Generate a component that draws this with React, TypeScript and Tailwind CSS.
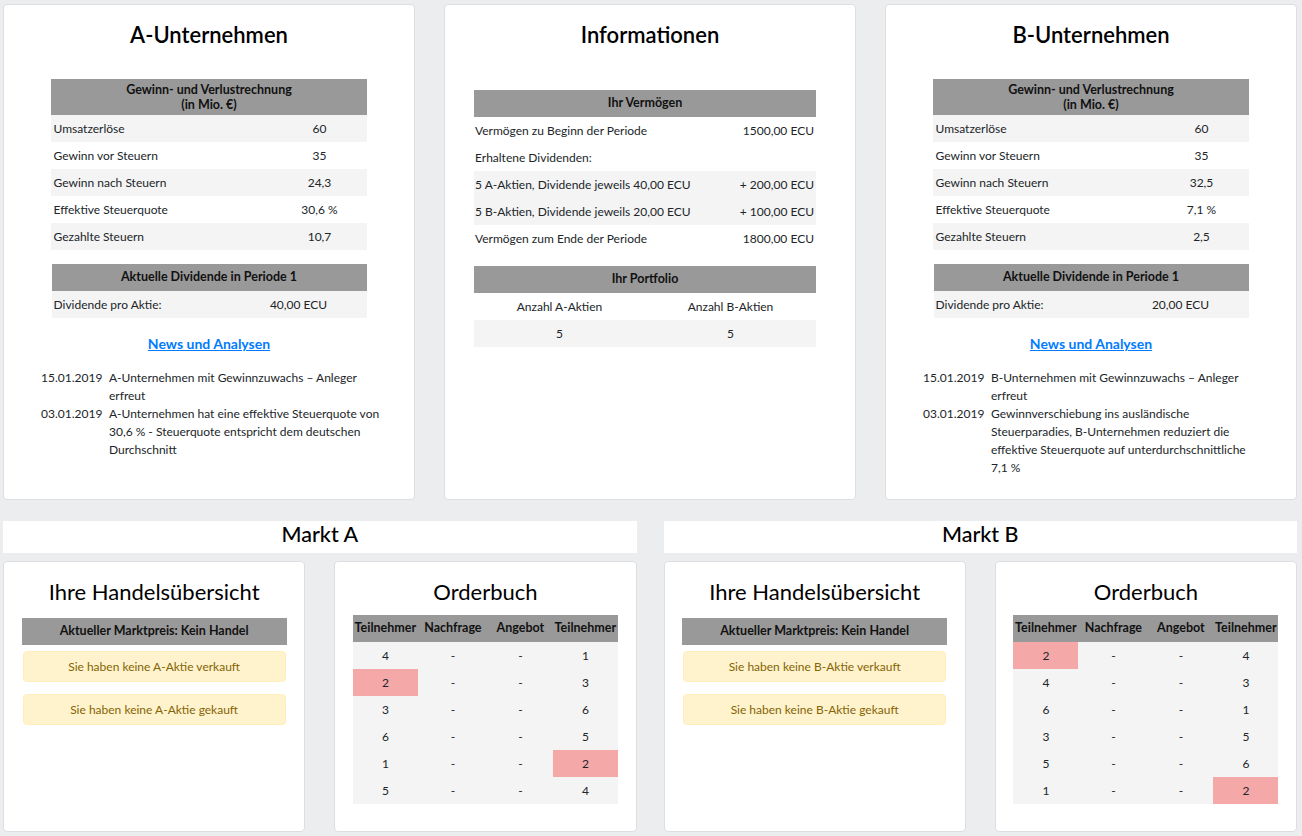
import React from "react";

type Row = [string, string];

interface CompanyProps {
    name: string;
    rows: Row[];
    dividend: string;
    news: { date: string; lines: string[] }[];
}

const font = { fontFamily: "Lato, 'Noto Sans', sans-serif" };

function Card({ className = "", children }: { className?: string; children: React.ReactNode }) {
    return (
        <div className={"rounded-[4px] border border-[#dcdee1] bg-white " + className}>{children}</div>
    );
}

function CompanyCard({ name, rows, dividend, news }: CompanyProps) {
    return (
        <Card className="h-[496px] pt-[15px]">
            <h2 className="text-center text-[22px] font-semibold leading-[30px] text-black">{name}</h2>

            <table className="mx-auto mt-[29px] w-[315px] table-fixed text-[12px]">
                <colgroup>
                    <col className="w-[221px]" />
                    <col className="w-[94px]" />
                </colgroup>
                <thead>
                    <tr className="bg-[#999999]">
                        <th colSpan={2} className="py-[3px] text-center text-[12.5px] font-bold leading-[15px] text-[#111]">
                            Gewinn- und Verlustrechnung
                            <br />
                            (in Mio. €)
                        </th>
                    </tr>
                </thead>
                <tbody>
                    {rows.map(([label, value], i) => (
                        <tr key={label} className={"h-[27px] " + (i % 2 === 0 ? "bg-[#f4f4f4]" : "bg-white")}>
                            <td className="pl-[2px]">{label}</td>
                            <td className="text-center">{value}</td>
                        </tr>
                    ))}
                </tbody>
            </table>

            <table className="mx-auto mt-[14px] w-[315px] table-fixed text-[12px]">
                <colgroup>
                    <col className="w-[179px]" />
                    <col className="w-[136px]" />
                </colgroup>
                <thead>
                    <tr className="h-[27px] bg-[#999999]">
                        <th colSpan={2} className="text-center text-[12.5px] font-bold text-[#111]">
                            Aktuelle Dividende in Periode 1
                        </th>
                    </tr>
                </thead>
                <tbody>
                    <tr className="h-[27px] bg-[#f4f4f4]">
                        <td className="pl-[2px]">Dividende pro Aktie:</td>
                        <td className="text-center">{dividend}</td>
                    </tr>
                </tbody>
            </table>

            <div className="mt-[13px] text-center">
                <a href="#" className="text-[14px] font-bold leading-[20px] text-[#007bff] underline">
                    News und Analysen
                </a>
            </div>

            <div className="mt-[14px] pl-[37px] text-[12px] leading-[18px]">
                {news.map((n) => (
                    <div key={n.date + n.lines[0]} className="flex">
                        <div className="w-[68px] shrink-0">{n.date}</div>
                        <div className="whitespace-nowrap">
                            {n.lines.map((l, i) => (
                                <div key={i}>{l}</div>
                            ))}
                        </div>
                    </div>
                ))}
            </div>
        </Card>
    );
}

function InfoCard() {
    const rows: { label: string; value: string; shaded: boolean }[] = [
        { label: "Vermögen zu Beginn der Periode", value: "1500,00 ECU", shaded: false },
        { label: "Erhaltene Dividenden:", value: "", shaded: false },
        { label: "5 A-Aktien, Dividende jeweils 40,00 ECU", value: "+ 200,00 ECU", shaded: true },
        { label: "5 B-Aktien, Dividende jeweils 20,00 ECU", value: "+ 100,00 ECU", shaded: true },
        { label: "Vermögen zum Ende der Periode", value: "1800,00 ECU", shaded: false },
    ];
    return (
        <Card className="h-[496px] pt-[15px]">
            <h2 className="text-center text-[22px] font-semibold leading-[30px] text-black">Informationen</h2>

            <table className="ml-[29px] mt-[40px] w-[342px] text-[12px]">
                <thead>
                    <tr className="h-[27px] bg-[#999999]">
                        <th colSpan={2} className="text-center text-[12.5px] font-bold text-[#111]">
                            Ihr Vermögen
                        </th>
                    </tr>
                </thead>
                <tbody>
                    {rows.map((r) => (
                        <tr key={r.label} className={"h-[27px] " + (r.shaded ? "bg-[#f4f4f4]" : "bg-white")}>
                            <td className="pl-[1px]">{r.label}</td>
                            <td className="pr-[2px] text-right">{r.value}</td>
                        </tr>
                    ))}
                </tbody>
            </table>

            <table className="ml-[29px] mt-[14px] w-[342px] table-fixed text-[12px]">
                <thead>
                    <tr className="h-[27px] bg-[#999999]">
                        <th colSpan={2} className="text-center text-[12.5px] font-bold text-[#111]">
                            Ihr Portfolio
                        </th>
                    </tr>
                </thead>
                <tbody>
                    <tr className="h-[27px] bg-white">
                        <td className="text-center">Anzahl A-Aktien</td>
                        <td className="text-center">Anzahl B-Aktien</td>
                    </tr>
                    <tr className="h-[27px] bg-[#f4f4f4]">
                        <td className="text-center">5</td>
                        <td className="text-center">5</td>
                    </tr>
                </tbody>
            </table>
        </Card>
    );
}

function TradeOverview({ share }: { share: string }) {
    return (
        <Card className="h-[271px] pt-[15px]">
            <h3 className="text-center text-[22px] font-normal leading-[30px] text-black">Ihre Handelsübersicht</h3>
            <div className="mx-auto mt-[11px] flex h-[27px] w-[265px] items-center justify-center bg-[#999999] text-[12.5px] font-bold text-[#111]">
                Aktueller Marktpreis: Kein Handel
            </div>
            <div className="mx-auto mt-[6px] flex h-[31px] w-[263px] items-center justify-center rounded-[4px] border border-[#ffeeba] bg-[#fff3cd] text-[12px] text-[#856404]">
                Sie haben keine {share}-Aktie verkauft
            </div>
            <div className="mx-auto mt-[12px] flex h-[31px] w-[263px] items-center justify-center rounded-[4px] border border-[#ffeeba] bg-[#fff3cd] text-[12px] text-[#856404]">
                Sie haben keine {share}-Aktie gekauft
            </div>
        </Card>
    );
}

type BookRow = { buyer: string; seller: string; hlBuyer?: boolean; hlSeller?: boolean };

function OrderBook({ rows }: { rows: BookRow[] }) {
    return (
        <Card className="h-[271px] pt-[15px]">
            <h3 className="text-center text-[22px] font-normal leading-[30px] text-black">Orderbuch</h3>
            <table className="mx-auto mt-[8px] w-[265px] table-fixed text-[12px]">
                <colgroup>
                    <col className="w-[65px]" />
                    <col className="w-[70px]" />
                    <col className="w-[65px]" />
                    <col className="w-[65px]" />
                </colgroup>
                <thead>
                    <tr className="h-[27px] bg-[#999999] text-[12.5px] font-bold text-[#111]">
                        <th className="text-center">Teilnehmer</th>
                        <th className="text-center">Nachfrage</th>
                        <th className="text-center">Angebot</th>
                        <th className="text-center">Teilnehmer</th>
                    </tr>
                </thead>
                <tbody>
                    {rows.map((r, i) => (
                        <tr key={i} className="h-[27px] bg-[#f4f4f4]">
                            <td className={"text-center " + (r.hlBuyer ? "bg-[#f5a8a8]" : "")}>{r.buyer}</td>
                            <td className="text-center">-</td>
                            <td className="text-center">-</td>
                            <td className={"text-center " + (r.hlSeller ? "bg-[#f5a8a8]" : "")}>{r.seller}</td>
                        </tr>
                    ))}
                </tbody>
            </table>
        </Card>
    );
}

function Market({ title, share, rows }: { title: string; share: string; rows: BookRow[] }) {
    return (
        <div>
            <div className="flex h-[32px] items-center justify-center bg-white pb-[6px] text-[21.5px] font-medium text-black">
                {title}
            </div>
            <div className="mt-[8px] grid grid-cols-2 gap-[29px]">
                <TradeOverview share={share} />
                <OrderBook rows={rows} />
            </div>
        </div>
    );
}

export default function App() {
    return (
        <div className="min-h-[836px] bg-[#ebedef] pl-[3px] pr-[5px] pt-[4px] text-[#212529]" style={font}>
            <div className="grid grid-cols-3 gap-[29px]">
                <CompanyCard
                    name="A-Unternehmen"
                    rows={[
                        ["Umsatzerlöse", "60"],
                        ["Gewinn vor Steuern", "35"],
                        ["Gewinn nach Steuern", "24,3"],
                        ["Effektive Steuerquote", "30,6 %"],
                        ["Gezahlte Steuern", "10,7"],
                    ]}
                    dividend="40,00 ECU"
                    news={[
                        { date: "15.01.2019", lines: ["A-Unternehmen mit Gewinnzuwachs – Anleger", "erfreut"] },
                        {
                            date: "03.01.2019",
                            lines: [
                                "A-Unternehmen hat eine effektive Steuerquote von",
                                "30,6 % - Steuerquote entspricht dem deutschen",
                                "Durchschnitt",
                            ],
                        },
                    ]}
                />
                <InfoCard />
                <CompanyCard
                    name="B-Unternehmen"
                    rows={[
                        ["Umsatzerlöse", "60"],
                        ["Gewinn vor Steuern", "35"],
                        ["Gewinn nach Steuern", "32,5"],
                        ["Effektive Steuerquote", "7,1 %"],
                        ["Gezahlte Steuern", "2,5"],
                    ]}
                    dividend="20,00 ECU"
                    news={[
                        { date: "15.01.2019", lines: ["B-Unternehmen mit Gewinnzuwachs – Anleger", "erfreut"] },
                        {
                            date: "03.01.2019",
                            lines: [
                                "Gewinnverschiebung ins ausländische",
                                "Steuerparadies, B-Unternehmen reduziert die",
                                "effektive Steuerquote auf unterdurchschnittliche",
                                "7,1 %",
                            ],
                        },
                    ]}
                />
            </div>

            <div className="mt-[21px] grid grid-cols-2 gap-[27px]">
                <Market
                    title="Markt A"
                    share="A"
                    rows={[
                        { buyer: "4", seller: "1" },
                        { buyer: "2", seller: "3", hlBuyer: true },
                        { buyer: "3", seller: "6" },
                        { buyer: "6", seller: "5" },
                        { buyer: "1", seller: "2", hlSeller: true },
                        { buyer: "5", seller: "4" },
                    ]}
                />
                <Market
                    title="Markt B"
                    share="B"
                    rows={[
                        { buyer: "2", seller: "4", hlBuyer: true },
                        { buyer: "4", seller: "3" },
                        { buyer: "6", seller: "1" },
                        { buyer: "3", seller: "5" },
                        { buyer: "5", seller: "6" },
                        { buyer: "1", seller: "2", hlSeller: true },
                    ]}
                />
            </div>
        </div>
    );
}
